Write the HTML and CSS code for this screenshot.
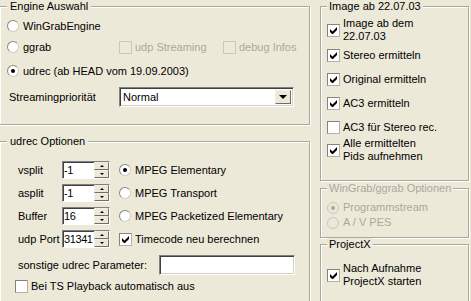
FILE: index.html
```html
<!DOCTYPE html>
<html lang="de">
  <head>
    <meta charset="UTF-8" />
    <title>Engine Einstellungen</title>
    <link rel="stylesheet" href="styles.css">
  </head>
  <body>
    <svg class="defs">
      <symbol id="tick" viewBox="0 0 7 7"><polygon points="0,2 2.5,4.5 7,0 7,3 2.5,7.5 0,5" /></symbol>
    </svg>
    <div class="dialog">
      <div class="col col-left">
        <fieldset class="group engine">
          <legend>Engine Auswahl</legend>
          <div class="row e1">
            <label class="opt"><span class="radio"></span>WinGrabEngine</label>
          </div>
          <div class="row e2">
            <label class="opt w-ggrab"><span class="radio"></span>ggrab</label>
            <label class="opt w-udp dis"><span class="check"></span>udp Streaming</label>
            <label class="opt dis"><span class="check"></span>debug Infos</label>
          </div>
          <div class="row e3">
            <label class="opt"><span class="radio on"></span>udrec (ab HEAD vom 19.09.2003)</label>
          </div>
          <div class="row e4">
            <span class="prio-label">Streamingpriorität</span>
            <div class="select">
              <span class="select-val">Normal</span>
              <span class="select-btn"></span>
            </div>
          </div>
        </fieldset>

        <fieldset class="group udrec">
          <legend>udrec Optionen</legend>
          <div class="row u1">
            <span class="field-label">vsplit</span>
            <span class="spin"><span class="spin-val">-1</span><span class="spin-btns"><span class="up"></span><span class="down"></span></span></span>
            <label class="opt"><span class="radio on"></span>MPEG Elementary</label>
          </div>
          <div class="row u2">
            <span class="field-label">asplit</span>
            <span class="spin"><span class="spin-val">-1</span><span class="spin-btns"><span class="up"></span><span class="down"></span></span></span>
            <label class="opt"><span class="radio"></span>MPEG Transport</label>
          </div>
          <div class="row u2">
            <span class="field-label">Buffer</span>
            <span class="spin"><span class="spin-val">16</span><span class="spin-btns"><span class="up"></span><span class="down"></span></span></span>
            <label class="opt"><span class="radio"></span>MPEG Packetized Elementary</label>
          </div>
          <div class="row u2">
            <span class="field-label">udp Port</span>
            <span class="spin"><span class="spin-val">31341</span><span class="spin-btns"><span class="up"></span><span class="down"></span></span></span>
            <label class="opt"><span class="check"><svg><use href="#tick" /></svg></span>Timecode neu berechnen</label>
          </div>
          <div class="row u5">
            <span class="param-label">sonstige udrec Parameter:</span>
            <span class="textbox"></span>
          </div>
          <div class="row u6">
            <label class="opt"><span class="check"></span>Bei TS Playback automatisch aus</label>
          </div>
        </fieldset>
      </div>

      <div class="col col-right">
        <fieldset class="group image">
          <legend>Image ab 22.07.03</legend>
          <label class="opt two i1"><span class="check"><svg><use href="#tick" /></svg></span><span>Image ab dem<br>22.07.03</span></label>
          <label class="opt row i2"><span class="check"><svg><use href="#tick" /></svg></span>Stereo ermitteln</label>
          <label class="opt row i3"><span class="check"><svg><use href="#tick" /></svg></span>Original ermitteln</label>
          <label class="opt row i3"><span class="check"><svg><use href="#tick" /></svg></span>AC3 ermitteln</label>
          <label class="opt row i3"><span class="check"></span>AC3 für Stereo rec.</label>
          <label class="opt two"><span class="check"><svg><use href="#tick" /></svg></span><span>Alle ermittelten<br>Pids aufnehmen</span></label>
        </fieldset>

        <fieldset class="group wingrab dis">
          <legend>WinGrab/ggrab Optionen</legend>
          <label class="opt small w1"><span class="radio on"></span>Programmstream</label>
          <label class="opt small"><span class="radio"></span>A / V PES</label>
        </fieldset>

        <fieldset class="group projectx">
          <legend>ProjectX</legend>
          <label class="opt two p1"><span class="check"><svg><use href="#tick" /></svg></span><span>Nach Aufnahme<br>ProjectX starten</span></label>
        </fieldset>
      </div>
    </div>
  </body>
</html>
```

FILE: styles.css
```css
body {
  margin: 0;
  background: #ece9d8;
  font-family: "Liberation Sans", Arial, sans-serif;
  font-size: 11px;
  line-height: 13px;
  color: #000;
  overflow: hidden;
}
.defs {
  display: none;
}
.dialog {
  display: flex;
  align-items: flex-start;
  gap: 10px;
  margin-left: -1px;
}
.col {
  display: flex;
  flex-direction: column;
}
.col-left {
  width: 311px;
}
.col-right {
  width: 149px;
}

/* group boxes */
.group {
  margin: 0;
  padding: 0 0 0 7px;
  min-width: 0;
  border: 1px solid #aca899;
  box-shadow: inset 1px 1px 0 #fff, 1px 1px 0 #fff;
}
.group legend {
  margin-left: 0;
  padding: 0 3px;
  background: #ece9d8;
}
.col-right .group {
  padding-left: 6px;
}
.col-right .group legend {
  padding: 0 2px;
}
.engine {
  padding-bottom: 17px;
}
.udrec {
  margin-top: 10px;
  padding-bottom: 40px;
}
.image {
  padding-bottom: 17px;
}
.wingrab {
  margin-top: 1px;
  padding-bottom: 7px;
}
.projectx {
  padding-bottom: 40px;
}

.row {
  display: flex;
  align-items: center;
  height: 20px;
}
.e1 { margin-top: 3px; }
.e2 { margin-top: 1px; }
.e3 { margin-top: 4px; }
.e4 { margin-top: 6px; }
.u1 { margin-top: 13px; height: 18px; }
.u2 { margin-top: 5px; height: 18px; }
.u5 { margin-top: 7px; }
.u6 { margin-top: 1px; padding-left: 8px; }
.i1 { margin-top: 4px; }
.i2 { margin-top: 2px; }
.i3 { margin-top: 4px; }
.w1 { margin-top: 5px; }
.p1 { margin-top: 11px; }

/* options */
.opt {
  display: flex;
  align-items: center;
  white-space: nowrap;
}
.opt.small {
  height: 15px;
}
.w-ggrab {
  width: 112px;
}
.w-udp {
  width: 104px;
}
.dis,
.dis legend {
  color: #aca899;
}

.radio {
  flex: none;
  width: 12px;
  height: 12px;
  box-sizing: border-box;
  margin-right: 4px;
  border: 1px solid;
  border-color: #8a8a84 #cfcdc3 #cfcdc3 #8a8a84;
  border-radius: 50%;
  background: #fff;
  display: flex;
  align-items: center;
  justify-content: center;
}
.radio.on::after {
  content: "";
  width: 4px;
  height: 4px;
  border-radius: 50%;
  background: #000;
}
.dis .radio {
  background: #ece9d8;
  border-color: #cac8bb;
}
.dis .radio.on::after {
  background: #aca899;
}

.check {
  flex: none;
  width: 13px;
  height: 13px;
  box-sizing: border-box;
  margin-right: 3px;
  border: 1px solid;
  border-color: #85847c #b4b2a8 #b4b2a8 #85847c;
  background: #fff;
  display: flex;
  align-items: center;
  justify-content: center;
}
.check svg {
  width: 7px;
  height: 7px;
  fill: #000;
}
.dis .check {
  background: #ece9d8;
  border-color: #cac8bb;
}

/* engine selection */
.prio-label {
  width: 110px;
  margin-left: 2px;
}
.select {
  display: flex;
  width: 175px;
  height: 20px;
  box-sizing: border-box;
  border: 1px solid;
  border-color: #808080 #fff #fff #808080;
  box-shadow: inset 1px 1px 0 #404040, inset -1px -1px 0 #d4d0c8;
  background: #fff;
  padding: 2px;
}
.select-val {
  flex: 1;
  padding-left: 1px;
  line-height: 14px;
}
.select-btn {
  width: 16px;
  box-sizing: border-box;
  border: 1px solid;
  border-color: #f1efe2 #716f64 #716f64 #f1efe2;
  background: #ece9d8;
  display: flex;
  align-items: center;
  justify-content: center;
}
.select-btn::after {
  content: "";
  border-left: 4px solid transparent;
  border-right: 4px solid transparent;
  border-top: 4px solid #000;
}

/* udrec options */
.field-label {
  width: 44px;
  margin-left: 11px;
}
.spin {
  display: flex;
  width: 48px;
  height: 18px;
  box-sizing: border-box;
  margin-right: 9px;
  border: 1px solid;
  border-color: #808080 #fff #fff #808080;
  box-shadow: inset 1px 1px 0 #404040;
  background: #fff;
}
.spin-val {
  flex: 1;
  min-width: 0;
  padding: 1px 0 0 1px;
  line-height: 14px;
  letter-spacing: -0.4px;
  white-space: nowrap;
}
.spin-btns {
  flex: none;
  width: 15px;
  display: flex;
  flex-direction: column;
}
.spin-btns span {
  flex: 1;
  box-sizing: border-box;
  border: 1px solid;
  border-color: #f1efe2 #716f64 #716f64 #f1efe2;
  background: #ece9d8;
  display: flex;
  align-items: center;
  justify-content: center;
}
.spin-btns .up::after {
  content: "";
  border-left: 2px solid transparent;
  border-right: 2px solid transparent;
  border-bottom: 2px solid #000;
}
.spin-btns .down::after {
  content: "";
  border-left: 2px solid transparent;
  border-right: 2px solid transparent;
  border-top: 2px solid #000;
}
.param-label {
  width: 141px;
  margin-left: 11px;
}
.textbox {
  width: 136px;
  height: 20px;
  box-sizing: border-box;
  border: 1px solid;
  border-color: #808080 #fff #fff #808080;
  box-shadow: inset 1px 1px 0 #404040, inset -1px -1px 0 #d4d0c8;
  background: #fff;
}
```
